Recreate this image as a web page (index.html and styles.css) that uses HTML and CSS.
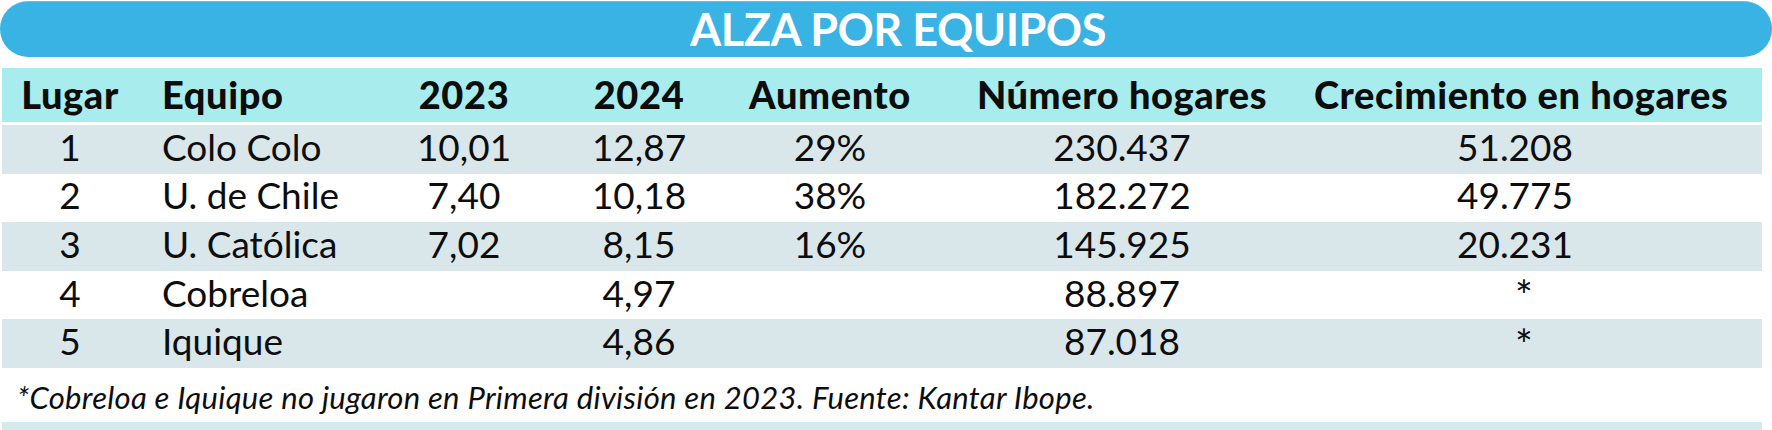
FILE: index.html
```html
<!DOCTYPE html>
<html lang="es">
<head>
<meta charset="utf-8">
<title>Alza por equipos</title>
<link rel="stylesheet" href="styles.css">
</head>
<body>
<div class="graphic">
  <div class="title-bar"><h1 class="title">ALZA POR EQUIPOS</h1></div>
  <div class="table">
    <div class="row head">
      <div class="c">Lugar</div>
      <div class="c team">Equipo</div>
      <div class="c">2023</div>
      <div class="c">2024</div>
      <div class="c">Aumento</div>
      <div class="c">Número hogares</div>
      <div class="c">Crecimiento en hogares</div>
    </div>
    <div class="row tint">
      <div class="c">1</div>
      <div class="c team">Colo Colo</div>
      <div class="c">10,01</div>
      <div class="c">12,87</div>
      <div class="c">29%</div>
      <div class="c">230.437</div>
      <div class="c">51.208</div>
    </div>
    <div class="row">
      <div class="c">2</div>
      <div class="c team">U. de Chile</div>
      <div class="c">7,40</div>
      <div class="c">10,18</div>
      <div class="c">38%</div>
      <div class="c">182.272</div>
      <div class="c">49.775</div>
    </div>
    <div class="row tint">
      <div class="c">3</div>
      <div class="c team">U. Católica</div>
      <div class="c">7,02</div>
      <div class="c">8,15</div>
      <div class="c">16%</div>
      <div class="c">145.925</div>
      <div class="c">20.231</div>
    </div>
    <div class="row">
      <div class="c">4</div>
      <div class="c team">Cobreloa</div>
      <div class="c"></div>
      <div class="c">4,97</div>
      <div class="c"></div>
      <div class="c">88.897</div>
      <div class="c star">*</div>
    </div>
    <div class="row tint">
      <div class="c">5</div>
      <div class="c team">Iquique</div>
      <div class="c"></div>
      <div class="c">4,86</div>
      <div class="c"></div>
      <div class="c">87.018</div>
      <div class="c star">*</div>
    </div>
  </div>
  <p class="note">*Cobreloa e Iquique no jugaron en Primera división en 2023. Fuente: Kantar Ibope.</p>
  <div class="strip"></div>
</div>
</body>
</html>
```

FILE: styles.css
```css
html, body {
  margin: 0;
  padding: 0;
  background: #ffffff;
}

body {
  width: 1772px;
  height: 430px;
  overflow: hidden;
  font-family: "Lato", "Open Sans", sans-serif;
  color: #0d0d0d;
}

.graphic {
  padding-top: 1px;
}

.title-bar {
  height: 56px;
  background: #38b3e4;
  border-top: 1px solid #5cc3ec;
  box-sizing: border-box;
  border-radius: 28px;
  display: flex;
  align-items: center;
  justify-content: center;
  padding-left: 24px;
}

.title {
  margin: 0;
  color: #ffffff;
  font-weight: 700;
  font-size: 45px;
  line-height: 1;
  letter-spacing: -0.5px;
}

.table {
  margin-top: 11px;
  margin-left: 2px;
  width: 1760px;
}

.row {
  display: grid;
  grid-template-columns: 136px 242px 168px 182px 200px 384px 402px 46px;
  align-items: center;
  box-sizing: border-box;
  height: 48.6px;
  padding-bottom: 6px;
  font-size: 37px;
  line-height: 1;
}

.row.head {
  height: 54px;
  padding-bottom: 3px;
  margin-bottom: 3px;
  background: #a9ecee;
  font-weight: 900;
  font-size: 38px;
  letter-spacing: 0.6px;
}

.row.tint {
  background: #d9e7eb;
}

.c {
  text-align: center;
  white-space: nowrap;
}

.c.team {
  text-align: left;
  padding-left: 24px;
}

.c.star {
  font-size: 42px;
  line-height: 30px;
  padding: 6px 0 0 18px;
}

.note {
  margin: 0;
  height: 54px;
  box-sizing: border-box;
  padding: 14px 0 0 17px;
  font-style: italic;
  font-size: 31px;
  line-height: 1;
  letter-spacing: 0.3px;
}

.strip {
  height: 8px;
  width: 1760px;
  margin-left: 2px;
  background: #d4ebee;
}
```
